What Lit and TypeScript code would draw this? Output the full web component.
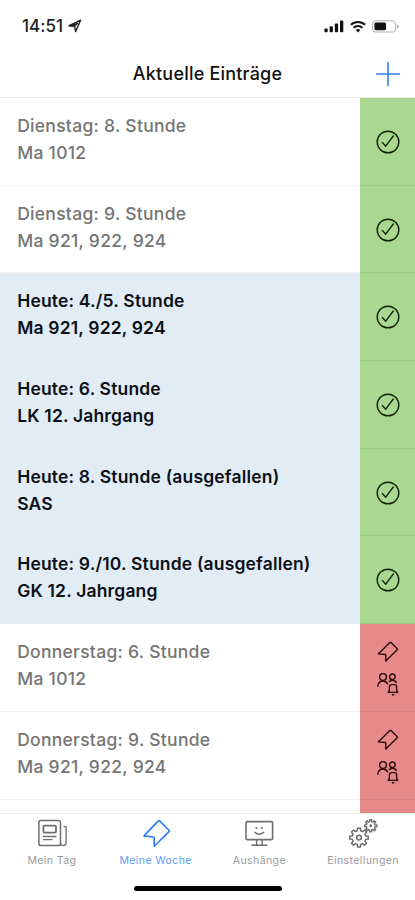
import { LitElement, html, svg, css } from "lit";
import { customElement, property, state } from "lit/decorators.js";
import { classMap } from "lit/directives/class-map.js";

interface Entry {
  when: string;
  course: string;
  today?: boolean;
  open?: boolean;
}

const entries: Entry[] = [
  { when: "Dienstag: 8. Stunde", course: "Ma 1012" },
  { when: "Dienstag: 9. Stunde", course: "Ma 921, 922, 924" },
  { when: "Heute: 4./5. Stunde", course: "Ma 921, 922, 924", today: true },
  { when: "Heute: 6. Stunde", course: "LK 12. Jahrgang", today: true },
  { when: "Heute: 8. Stunde (ausgefallen)", course: "SAS", today: true },
  { when: "Heute: 9./10. Stunde (ausgefallen)", course: "GK 12. Jahrgang", today: true },
  { when: "Donnerstag: 6. Stunde", course: "Ma 1012", open: true },
  { when: "Donnerstag: 9. Stunde", course: "Ma 921, 922, 924", open: true },
  { when: "", course: "", open: true },
];

// Outline of a cog wheel with `n` teeth between radii `r` and `R`.
function gear(cx: number, cy: number, r: number, R: number, n: number): string {
  const pts: string[] = [];
  const step = (Math.PI * 2) / n;
  for (let i = 0; i < n; i++) {
    for (const [f, rad] of [[-0.3, r], [-0.2, R], [0.2, R], [0.3, r]]) {
      const a = (i + f) * step - Math.PI / 2;
      pts.push(`${(cx + rad * Math.cos(a)).toFixed(2)} ${(cy + rad * Math.sin(a)).toFixed(2)}`);
    }
  }
  return `M${pts.join("L")}Z`;
}

const newsIcon = svg`
  <rect x="2.9" y="2.4" width="21.6" height="25.2" rx="2.2" stroke-width="1.5"/>
  <path d="M24.5 25.5a2.9 2.9 0 0 0 5.6 0V8.6h-2.2"/>
  <rect x="7.4" y="7.6" width="12.6" height="7" rx="1.2" stroke-width="1.8"/>
  <path d="M7.4 18.5H20M7.4 21.6H16"/>`;
const tagIcon = svg`<path stroke-width="1.6" d="M18.3 2.9q.6-.6 1.3 0l9.4 9.3q.7.7 0 1.4L14.2 28.2V19.8q0-.7-.7-.8L4 17.9Z"/>`;
const boardIcon = svg`
  <rect x="3" y="3.6" width="26.6" height="18" rx="1.2" stroke-width="1.6"/>
  <path d="M13.6 21.6v5.2M19.2 21.6v5.2M8.8 27.2h15" stroke-width="1.4"/>
  <path d="M13.4 9.9v.1M19 9.9v.1" stroke-width="2"/>
  <path d="M11.8 14.2q4.5 4 9 0" stroke-width="1.4"/>`;
const gearsIcon = svg`
  <path stroke-width="1.5" d=${gear(12, 19.6, 7, 9.4, 8)}/>
  <circle cx="12" cy="19.6" r="2.4" stroke-width="1.5"/>
  <path stroke-width="1.4" d=${gear(23.7, 7.8, 4.3, 6.2, 8)}/>
  <circle cx="23.7" cy="7.8" r=".8"/>`;

@customElement("entry-row")
export class EntryRow extends LitElement {
  @property({ attribute: false }) entry!: Entry;

  static styles = css`
    :host { display: block; flex: 0 0 87.7px; height: 87.7px; }
    .row { display: flex; height: 100%; color: #757575; background: #fff; }
    .row.today { color: #0c1117; background: #e2ecf5; }
    .text {
      flex: 1; padding: 14px 0 0 17.2px; box-sizing: border-box;
      font-weight: 500; font-size: 17.5px; line-height: 27px; letter-spacing: 0.28px;
      white-space: nowrap; border-bottom: 1.3px solid #f1f1f1;
    }
    .today .text { border-color: #e2ecf5; font-weight: 600; letter-spacing: 0.17px; }
    .state {
      width: 54.7px; box-sizing: border-box; background: #aad890;
      border-bottom: 1.4px solid #9ccc84;
      display: flex; flex-direction: column; align-items: center; justify-content: center;
    }
    .open .state { background: #e68989; border-color: #db8080; justify-content: flex-start; padding-top: 16.9px; }
    svg { display: block; fill: none; stroke: #14240e; stroke-linejoin: round; stroke-linecap: round; }
    .check { margin-top: 1.2px; }
    .open svg { stroke: #2a0c0c; }
    .people { margin-top: 10px; }
  `;

  render() {
    const e = this.entry;
    return html`<div class=${classMap({ row: true, today: !!e.today, open: !!e.open })}>
      <div class="text"><div>${e.when}</div><div>${e.course}</div></div>
      <div class="state">
        ${e.open
          ? html`<svg width="22" height="22" viewBox="0 0 22 22" stroke-width="1.4">
                <path d="M12.9 1.4q.5-.5 1 0l6.3 6.3q.5.5 0 1L8.8 20V14.2q0-.6-.6-.7L1.3 12.9Z" />
              </svg>
              <svg class="people" width="22" height="23" viewBox="0 0 22 23" stroke-width="1.4">
                <circle cx="6" cy="4" r="3.4" />
                <path d="M.9 13.2C1.2 9.5 3 8 6 8q3.4 0 4.6 3" />
                <circle cx="15.4" cy="3.8" r="2.8" />
                <path d="M12.4 8.4q1.2-1.2 3-1.2 3 0 3.9 2.3" />
                <path d="M11.2 19.4q1.2-.8 1.2-2.6v-2.6q0-2.6 2.6-2.6h2q2.6 0 2.6 2.6v2.6q0 1.8 1.2 2.6ZM15.4 21.8h1.4" />
              </svg>`
          : html`<svg class="check" width="24" height="24" viewBox="0 0 24 24" stroke-width="1.4">
              <circle cx="12" cy="12" r="10.8" />
              <path d="M6.5 12.6l3.2 3.6 7.6-10.2" />
            </svg>`}
      </div>
    </div>`;
  }
}

@customElement("app-root")
export class AppRoot extends LitElement {
  @state() private active = 1;

  private tabs = [
    { label: "Mein Tag", icon: newsIcon },
    { label: "Meine Woche", icon: tagIcon },
    { label: "Aushänge", icon: boardIcon },
    { label: "Einstellungen", icon: gearsIcon },
  ];

  static styles = css`
    :host {
      display: flex; flex-direction: column; width: 415px; height: 900px;
      overflow: hidden; background: #fff; color: #111;
      font-family: Inter, "Liberation Sans", sans-serif;
    }
    svg { display: block; }
    .status { height: 52px; box-sizing: border-box; padding: 0 16px 0 22px; display: flex; align-items: center; }
    .time { font-size: 17px; font-weight: 500; letter-spacing: 0.05px; line-height: 20px; color: #222; }
    .arrow { margin-left: 5px; }
    .signals { margin-left: auto; display: flex; align-items: center; gap: 6px; }
    .nav {
      height: 46px; box-sizing: border-box; border-bottom: 1.3px solid #ececec; padding-bottom: 2px;
      display: grid; grid-template-columns: 60px 1fr 60px; align-items: center;
    }
    .title { grid-column: 2; text-align: center; font-size: 18px; font-weight: 500; line-height: 22px; letter-spacing: 0.2px; white-space: nowrap; }
    .add { justify-self: end; margin-right: 15px; }
    .list { height: 715px; overflow: hidden; display: flex; flex-direction: column; }
    .tabs { height: 73px; border-top: 1px solid #ebebeb; display: grid; grid-template-columns: repeat(4, 1fr); box-sizing: border-box; }
    .tab { display: flex; flex-direction: column; align-items: center; padding-top: 4px; color: #9a9a9a; font-size: 10.6px; line-height: 14px; letter-spacing: 0.36px; white-space: nowrap; cursor: pointer; }
    .tab svg { fill: none; stroke: #6e6e6e; stroke-width: 1.3; stroke-linejoin: round; stroke-linecap: round; margin-bottom: 5px; }
    .tab.active { color: #5c9cf8; }
    .tab.active svg { stroke: #2b7bf3; }
    .home { width: 148px; height: 5px; border-radius: 3px; background: #000; margin: 0 auto; }
  `;

  render() {
    return html`
      <div class="status">
        <span class="time">14:51</span>
        <svg class="arrow" width="14" height="14" viewBox="0 0 14 14" fill="none" stroke="#222" stroke-width="1.4" stroke-linejoin="round">
          <path d="M12.6 1.2L1.2 6.7 6.6 7.1 7.6 12.6Z" /><path d="M1.2 6.7l5.4.4 3-2.8Z" fill="#222" />
        </svg>
        <div class="signals">
          <svg width="20" height="13" viewBox="0 0 20 13" fill="#111">
            <rect x=".4" y="8.6" width="3.3" height="3.6" rx=".9" /><rect x="5.6" y="6.2" width="3.3" height="6" rx=".9" />
            <rect x="10.8" y="3.6" width="3.3" height="8.6" rx=".9" /><rect x="16" y=".5" width="3.3" height="11.7" rx=".9" />
          </svg>
          <svg width="16" height="13" viewBox="0 0 16 13" fill="none" stroke="#111" stroke-width="2">
            <path d="M.9 4.8a10.2 10.2 0 0 1 14.2 0M3.5 7.9a6.4 6.4 0 0 1 9 0" />
            <path d="M5.7 10a3.4 3.4 0 0 1 4.6 0L8 12.4Z" fill="#111" stroke="none" />
          </svg>
          <svg width="27" height="13" viewBox="0 0 27 13">
            <rect x=".6" y=".8" width="23" height="11.2" rx="3" fill="none" stroke="#b0b0b0" />
            <rect x="2.4" y="2.6" width="11.6" height="7.6" rx="1.4" fill="#111" />
            <path d="M25 4.4q1.5.6 1.5 2T25 8.4Z" fill="#999" />
          </svg>
        </div>
      </div>
      <div class="nav">
        <div class="title">Aktuelle Einträge</div>
        <svg class="add" width="24" height="24" viewBox="0 0 24 24" stroke="#2b82f6" stroke-width="1.6"><path d="M12 0v24M0 12h24" /></svg>
      </div>
      <div class="list">${entries.map((e) => html`<entry-row .entry=${e}></entry-row>`)}</div>
      <div class="tabs">
        ${this.tabs.map(
          (t, i) => html`<div class=${classMap({ tab: true, active: i === this.active })} @click=${() => (this.active = i)}>
            <svg width="32" height="31" viewBox="0 0 32 31">${t.icon}</svg><span>${t.label}</span>
          </div>`
        )}
      </div>
      <div class="home"></div>
    `;
  }
}
